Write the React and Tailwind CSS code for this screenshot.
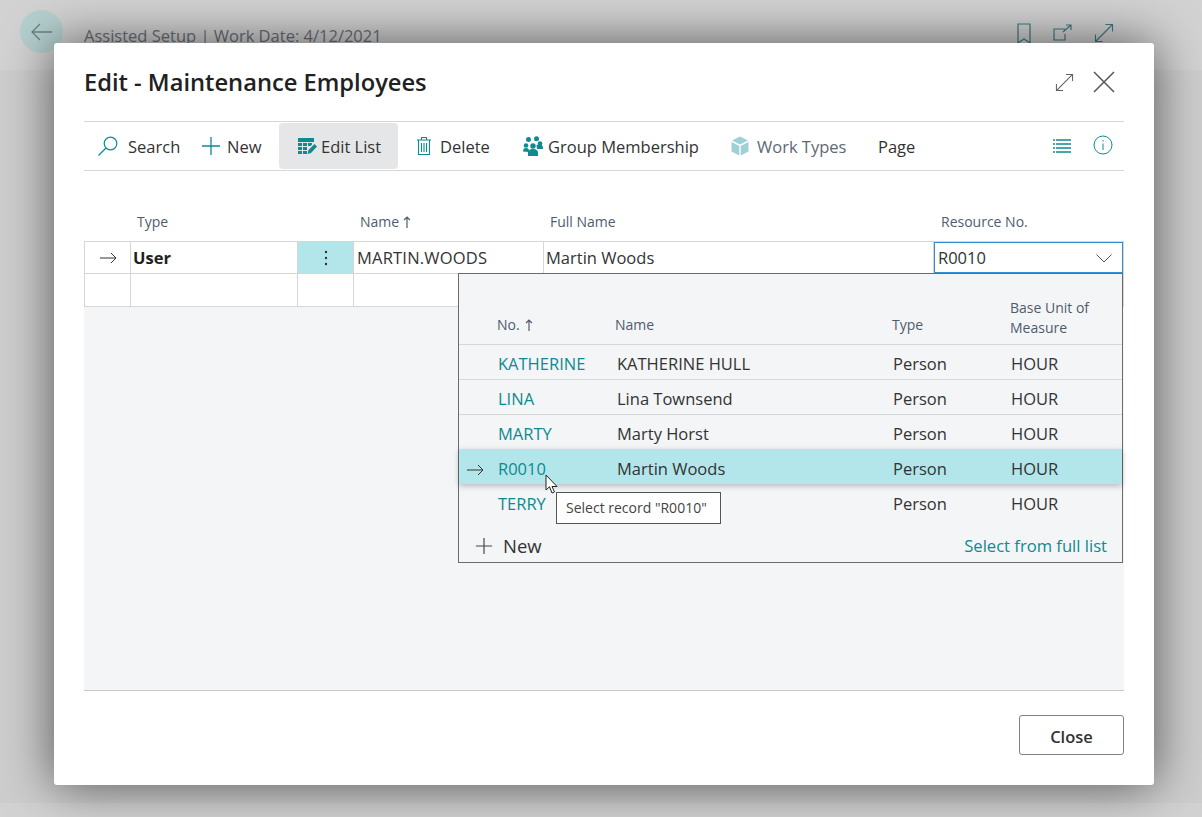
const font = { fontFamily: '"Open Sans", sans-serif' };

function Search() {
  return <svg width="22" height="22" viewBox="0 0 22 22" fill="none" stroke="#0e8a91" strokeWidth="1.2"><circle cx="13.5" cy="8.5" r="6.3" /><path d="M9 13 L1.5 20.5" /></svg>;
}
function Plus({ c = "#0e8a91", s = 20 }) {
  return <svg width={s} height={s} viewBox="0 0 20 20" fill="none" stroke={c} strokeWidth="1.3"><path d="M10 1v18M1 10h18" /></svg>;
}
function EditList() {
  return <svg width="20" height="18" viewBox="0 0 20 18" fill="#0e8a91"><path d="M1 1h16v4H1z" /><path d="M1 6h4v3H1zM6 6h4v3H6zM11 6h4v1.500l-1.500 1.500H11zM1 10h4v3H1zM6 10h4v3H6zM1 14h4v3H1zM6 14h4v3H6z" /><path d="M10.500 17l1-4 6-6 2.500 2.500-6 6.500z" /></svg>;
}
function Trash() {
  return <svg width="16" height="20" viewBox="0 0 16 20" fill="none" stroke="#0e8a91" strokeWidth="1.1"><path d="M1 4h14M5.500 4V1.500h5V4M2.500 4v14.500h11V4M5.500 7v9M8 7v9M10.500 7v9" /></svg>;
}
function Group() {
  return <svg width="20" height="20" viewBox="0 0 20 20" fill="#0e8a91"><circle cx="5.500" cy="3.500" r="2.500" /><circle cx="13.500" cy="2.800" r="2.500" /><circle cx="3" cy="9.500" r="2.300" /><circle cx="17" cy="7.500" r="2.300" /><circle cx="10" cy="10" r="2.700" /><path d="M0 15.500c0-2.500 1-3.500 3.200-3.500s2.800 1 2.800 3v1zM13.500 9.500c0-1 1-1 3-1s3.500 1 3.500 3.500v1h-6zM5 20v-3c0-3 2-4 5-4s5 1 5 4v3z" /></svg>;
}
function Cube() {
  return <svg width="18" height="20" viewBox="0 0 18 20" fill="#9fd0d5"><path d="M9 .5 L17 4.500 L9 8.500 L1 4.500Z" /><path d="M.5 6 L8.300 10 V19.500 L.5 15.500Z" /><path d="M17.500 6 L9.700 10 V19.500 L17.500 15.500Z" /></svg>;
}
function ListIcon() {
  return <svg width="18" height="14" viewBox="0 0 18 14" fill="none" stroke="#0e8a91" strokeWidth="1.300"><path d="M0 1h2M3 1h15M0 5h2M3 5h15M0 9h2M3 9h15M0 13h2M3 13h15" /></svg>;
}
function Info() {
  return <svg width="20" height="20" viewBox="0 0 20 20" fill="none" stroke="#0e8a91" strokeWidth="1"><circle cx="10" cy="10" r="9" /><path d="M10 8.500v6.500M10 5v1.500" /></svg>;
}
function Expand({ c = "#5f6368", s = 20 }) {
  return <svg width={s} height={s} viewBox="0 0 20 20" fill="none" stroke={c} strokeWidth="1.100"><path d="M1.500 18.500 18.500 1.500M11.500 1.500h7v7M1.500 11.500v7h7" /></svg>;
}
function Arrow({ c = "#333" }) {
  return <svg width="17" height="12" viewBox="0 0 17 12" fill="none" stroke={c} strokeWidth="1"><path d="M0 6h16M11 1l5 5-5 5" /></svg>;
}
function SortUp({ c = "#505c6d" }) {
  return <svg width="8" height="12" viewBox="0 0 8 12" fill="none" stroke={c} strokeWidth="1.200"><path d="M4 12V1M1 4l3-3 3 3" /></svg>;
}

function Toolbar() {
  const label = "pt-[2px]";
  return (
    <div className="h-[50px] border-y border-[#d6d6d6] flex items-center shrink-0">
      <div className="flex items-center h-full pl-[13px] w-[117px] gap-[9px] text-[#333] text-[16.500px]"><Search /><span className={label}>Search</span></div>
      <div className="flex items-center h-full w-[78px] gap-[6px] text-[#333] text-[16.500px]"><Plus /><span className={label}>New</span></div>
      <div className="flex items-center self-start mt-px h-[46px] w-[119px] bg-[#e5e6e8] rounded-sm pl-[18px] gap-[4px] text-[#333] text-[16.500px]"><EditList /><span className={label}>Edit List</span></div>
      <div className="flex items-center h-full w-[125px] pl-[18px] gap-[8px] text-[#333] text-[16.500px]"><Trash /><span className={label}>Delete</span></div>
      <div className="flex items-center h-full w-[208px] gap-[5px] text-[#333] text-[16.500px]"><Group /><span className={label}>Group Membership</span></div>
      <div className="flex items-center h-full w-[147px] gap-[8px] text-[#5e6875] text-[16.500px]"><Cube /><span className={label}>Work Types</span></div>
      <div className={`flex items-center h-full text-[#333] text-[16.500px] ${label}`}>Page</div>
      <div className="ml-auto flex items-center gap-[22px] pr-[11px]"><ListIcon /><div className="-mt-[2px]"><Info /></div></div>
    </div>
  );
}

function ColHead() {
  return (
    <div className="h-[70px] bg-white flex items-end pb-[9px] text-[14px] text-[#505c6d] shrink-0">
      <div className="w-[53px]" />
      <div className="w-[223px]">Type</div>
      <div className="w-[190px] flex items-center gap-[4px]">Name <SortUp /></div>
      <div className="w-[391px]">Full Name</div>
      <div>Resource No.</div>
    </div>
  );
}

function MainRows() {
  const cell = "border-r border-[#d6d6d6] h-full flex items-center";
  return (
    <div className="border-t border-r border-[#d6d6d6] bg-white text-[16.500px] text-[#333] shrink-0">
      <div className="h-[32px] border-b border-[#d6d6d6] flex">
        <div className={`${cell} w-[47px] border-l justify-center pl-[2px]`}><Arrow /></div>
        <div className={`${cell} w-[167px] pl-[2px] pt-[2px] font-bold text-[#212121]`}>User</div>
        <div className={`${cell} w-[56px] justify-center bg-[#b2e6ea]`}><svg width="4" height="16" viewBox="0 0 4 16" fill="#333"><circle cx="2" cy="2" r="1.200" /><circle cx="2" cy="8" r="1.200" /><circle cx="2" cy="14" r="1.200" /></svg></div>
        <div className={`${cell} w-[190px] pl-[3px] pt-[2px] tracking-[0.2px]`}>MARTIN.WOODS</div>
        <div className={`${cell} w-[390px] pl-[2px] pt-[2px]`}>Martin Woods</div>
        <div className="flex-1 h-full border border-[#2f8fd0] pl-[3px] pr-[10px] pt-[2px] flex items-center justify-between">
          <span>R0010</span>
          <svg width="16" height="9" viewBox="0 0 16 9" fill="none" stroke="#555" strokeWidth="1"><path d="M.5.500 8 8 15.500.500" /></svg>
        </div>
      </div>
      <div className="h-[33px] border-b border-[#d6d6d6] flex">
        <div className={`${cell} w-[47px] border-l`} />
        <div className={`${cell} w-[167px]`} />
        <div className={`${cell} w-[56px]`} />
        <div className={`${cell} w-[190px]`} />
        <div className={`${cell} w-[390px]`} />
        <div className="flex-1" />
      </div>
    </div>
  );
}

const rows = [
  ["KATHERINE", "KATHERINE HULL"],
  ["LINA", "Lina Townsend"],
  ["MARTY", "Marty Horst"],
  ["R0010", "Martin Woods"],
  ["TERRY", ""],
];

function rowClass(no) {
  if (no === "R0010") return "-mt-px pt-[6px] bg-[#b2e6ea] shadow-[0_2px_6px_rgba(0,0,0,0.25)] relative";
  if (no === "TERRY") return "pt-[6px]";
  return "pt-[4px] border-b border-[#d6d6d6]";
}

function Dropdown() {
  return (
    <div className="absolute left-[374px] top-[102px] w-[665px] h-[290px] bg-[#f4f5f7] border border-[#6b6b6b] flex flex-col">
      <div className="h-[71px] border-b border-[#d6d6d6] flex items-end pb-[6px] text-[14px] text-[#505c6d] leading-[20px] shrink-0">
        <div className="w-[38px]" />
        <div className="w-[118px] flex items-center gap-[5px] mb-[3px]">No. <SortUp /></div>
        <div className="w-[277px] mb-[3px]">Name</div>
        <div className="w-[118px] mb-[3px]">Type</div>
        <div>Base Unit of<br />Measure</div>
      </div>
      {rows.map(([no, name]) => (
        <div key={no} className={`h-[35px] flex items-center text-[16.500px] shrink-0 ${rowClass(no)}`}>
          <div className="w-[39px] pl-[8px]">{no === "R0010" && <Arrow />}</div>
          <div className="w-[119px] text-[#0e8a91]">{no}</div>
          <div className="w-[276px] text-[#333]">{name}</div>
          <div className="w-[118px] text-[#333]">Person</div>
          <div className="text-[#333]">HOUR</div>
        </div>
      ))}
      <div className="flex-1 flex items-end justify-between pl-[16px] pr-[15px] pb-[2px] text-[#0e8a91]">
        <div className="flex items-center gap-[10px] text-[#333] text-[18.500px]"><Plus c="#444" s={18} /><span>New</span></div>
        <span className="text-[16.600px] mb-[1px]">Select from full list</span>
      </div>
    </div>
  );
}

function Cursor() {
  return (
    <svg className="absolute left-[461px] top-[303px]" width="14" height="21" viewBox="0 0 14 21">
      <path d="M1 1v15l3.500-3.300L7 19l2.500-1-2.500-5.500h5z" fill="#fff" stroke="#222" strokeWidth="1" />
    </svg>
  );
}

function Tooltip() {
  return (
    <div className="absolute left-[472px] top-[321px] w-[165px] h-[32px] bg-white border border-[#555] flex items-center pl-[9px] pb-[2px] text-[14px] text-[#444] whitespace-nowrap">
      Select record "R0010"
    </div>
  );
}

export default function App() {
  return (
    <div style={font} className="relative w-[1202px] h-[817px] bg-[#cdcdcd] overflow-hidden flex flex-col">
      <div className="h-[70px] bg-[#d2d2d2] flex items-center pl-[20px] text-[16.500px] text-[#6a7078] shrink-0">
        <div className="w-[43px] h-[43px] rounded-full bg-[#b5cfcf] flex items-center justify-center -mt-[7px]">
          <svg width="22" height="18" viewBox="0 0 22 18" fill="none" stroke="#6e8082" strokeWidth="1.300"><path d="M21 9H1M9 1 1 9l8 8" /></svg>
        </div>
        <span className="ml-[21px] mt-[3px]">Assisted Setup | Work Date: 4/12/2021</span>
        <div className="ml-auto flex items-center gap-[21px] pr-[88px] -mt-[5px]">
          <svg className="mr-px" width="14" height="20" viewBox="0 0 14 20" fill="none" stroke="#3a7c80" strokeWidth="1.200"><path d="M1 1h12v19l-6-4-6 4z" /></svg>
          <svg width="20" height="18" viewBox="0 0 20 18" fill="none" stroke="#3a7c80" strokeWidth="1.200"><path d="M12 5H1v11h11v-6M10 8l8-7M13 1h5v5" /></svg>
          <Expand c="#3a7c80" s={20} />
        </div>
      </div>
      <div className="flex-1" />
      <div className="h-[14px] bg-[#d2d2d2] shrink-0" />

      <div className="absolute left-[54px] top-[43px] w-[1100px] h-[742px] bg-white rounded-[3px] shadow-[0_0_50px_rgba(0,0,0,0.6)] flex flex-col px-[30px]">
        <div className="h-[78px] flex items-center justify-between shrink-0">
          <h1 className="text-[23.700px] font-semibold text-[#212121] mt-[2px]">Edit - Maintenance Employees</h1>
          <div className="flex items-center gap-[19px] pr-[9px]">
            <Expand s={19} />
            <svg width="22" height="22" viewBox="0 0 22 22" fill="none" stroke="#555" strokeWidth="1.500"><path d="M1 1l20 20M21 1 1 21" /></svg>
          </div>
        </div>
        <Toolbar />
        <div className="relative h-[520px] bg-[#f4f5f7] border-b border-[#c8c8c8] flex flex-col shrink-0">
          <ColHead />
          <MainRows />
          <Dropdown />
          <Cursor />
          <Tooltip />
        </div>
        <div className="flex-1 flex items-start justify-end pt-[24px]">
          <button className="w-[105px] h-[40px] pt-[5px] bg-white border border-[#808080] rounded-[3px] text-[16.500px] font-semibold text-[#333]">Close</button>
        </div>
      </div>
    </div>
  );
}
